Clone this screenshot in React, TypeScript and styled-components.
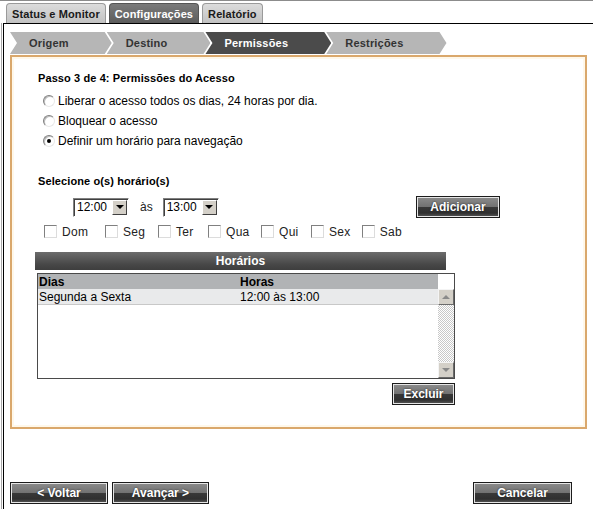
import * as React from 'react';
import styled, { createGlobalStyle, css } from 'styled-components';

const GlobalStyle = createGlobalStyle`
  html, body {
    margin: 0;
    padding: 0;
    background: #fff;
  }
  body {
    font-family: "Liberation Sans", Arial, sans-serif;
    font-size: 12px;
    color: #000;
  }
`;

const Page = styled.div`
  width: 593px;
  height: 509px;
  border-top: 1px solid #8c8c8c;
  box-sizing: border-box;
  overflow: hidden;
  display: flex;
  flex-direction: column;
`;

const TabRow = styled.div`
  display: flex;
  gap: 3px;
  padding: 2px 0 0 6px;
  height: 20px;
`;

const Tab = styled.div<{ $active?: boolean }>`
  height: 20px;
  box-sizing: border-box;
  padding: 0 5px;
  display: flex;
  align-items: center;
  font-weight: bold;
  font-size: 11px;
  letter-spacing: 0.1px;
  border: 1px solid #9a9a9a;
  border-bottom: none;
  border-radius: 4px 4px 0 0;
  color: #1a1a1a;
  background: linear-gradient(#dcdcdc, #c2c2c2);
  ${p => p.$active && css`
    color: #fff;
    border-color: #555;
    background: linear-gradient(#7a7a7a, #5c5c5c);
  `}
`;

const Body = styled.div`
  flex: 1;
  margin-left: 1px;
  border-left: 1px solid #a8a8a8;
  display: flex;
`;

const Frame = styled.div`
  flex: 1;
  margin-left: 1px;
  border-left: 1px solid #000;
  border-top: 1px solid #000;
  padding: 8px 0 0 6px;
  display: flex;
  flex-direction: column;
`;

const StepBar = styled.div`
  display: flex;
  height: 22px;
`;

const Step = styled.div<{ $active?: boolean; $first?: boolean }>`
  height: 22px;
  padding: 0 43px 0 19px;
  margin-left: ${p => (p.$first ? '0' : '-5px')};
  display: flex;
  align-items: center;
  font-weight: bold;
  font-size: 11px;
  letter-spacing: 0.2px;
  color: #333;
  background: #b6b6b6;
  clip-path: polygon(0 0, calc(100% - 7px) 0, 100% 50%, calc(100% - 7px) 100%, 0 100%, 7px 50%);
  ${p => p.$active && css`
    color: #fff;
    background: #4b4b4b;
  `}
`;

const StepBox = styled.div`
  margin-top: 1px;
  width: 577px;
  height: 374px;
  box-sizing: border-box;
  border: 2px solid #daa86c;
  box-shadow: inset 0 0 0 2px #fff8ea;
  padding: 14px 0 0 26px;
  display: flex;
  flex-direction: column;
`;

const Heading = styled.div`
  font-weight: bold;
  font-size: 11px;
  line-height: 14px;
  height: 14px;
  letter-spacing: 0.1px;
`;

const OptionList = styled.div`
  margin-top: 6px;
  display: flex;
  flex-direction: column;
`;

const OptionRow = styled.label`
  height: 20px;
  display: flex;
  align-items: center;
  gap: 3px;
  padding-left: 5px;
`;

const Radio = styled.span<{ $checked?: boolean }>`
  width: 12px;
  height: 12px;
  box-sizing: border-box;
  border-radius: 50%;
  border: 1px solid;
  border-color: #808080 #e8e8e8 #e8e8e8 #808080;
  background: #fff;
  box-shadow: inset 1px 1px 0 #bdbdbd;
  display: flex;
  align-items: center;
  justify-content: center;
  &::after {
    content: '';
    width: 4px;
    height: 4px;
    border-radius: 50%;
    background: ${p => (p.$checked ? '#000' : 'transparent')};
  }
`;

const SectionTitle = styled(Heading)`
  margin-top: 23px;
`;

const TimeRow = styled.div`
  margin-top: 8px;
  width: 462px;
  height: 22px;
  display: flex;
  align-items: center;
`;

const SelectBox = styled.div<{ $offset?: number }>`
  width: 56px;
  height: 19px;
  box-sizing: border-box;
  margin-left: ${p => p.$offset ?? 0}px;
  border: 1px solid;
  border-color: #808080 #fff #fff #808080;
  box-shadow: inset 1px 1px 0 #404040;
  background: #fff;
  display: flex;
  align-items: center;
  justify-content: space-between;
  padding: 1px 1px 1px 3px;
`;

const SelectButton = styled.span`
  width: 15px;
  height: 15px;
  box-sizing: border-box;
  background: #d4d0c8;
  border: 1px solid;
  border-color: #fff #404040 #404040 #fff;
  display: flex;
  align-items: center;
  justify-content: center;
  &::after {
    content: '';
    border-left: 4px solid transparent;
    border-right: 4px solid transparent;
    border-top: 4px solid #000;
  }
`;

const Between = styled.span`
  margin: 0 10px 0 11px;
  color: #222;
`;

const ActionButton = styled.button<{ $width: number }>`
  width: ${p => p.$width}px;
  height: 22px;
  box-sizing: border-box;
  padding: 0;
  border: 1px solid #1c1c1c;
  box-shadow: inset 0 0 0 1px #e6e6e6;
  background: linear-gradient(#8c8c8c 0%, #727272 48%, #383838 52%, #303030 80%, #5a5a5a 100%);
  color: #fff;
  font-family: "Liberation Sans", Arial, sans-serif;
  font-weight: bold;
  font-size: 12px;
  text-shadow: 0 0 2px #222;
  cursor: pointer;
`;

const AddButton = styled(ActionButton)`
  margin-left: auto;
`;

const DayRow = styled.div`
  margin-top: 6px;
  height: 15px;
  display: flex;
  align-items: center;
  padding-left: 6px;
`;

const DayItem = styled.label<{ $width: number }>`
  width: ${p => p.$width}px;
  display: flex;
  align-items: center;
  gap: 5px;
  color: #222;
  letter-spacing: 0.3px;
`;

const Checkbox = styled.span`
  width: 13px;
  height: 13px;
  box-sizing: border-box;
  border: 1px solid;
  border-color: #808080 #dcdcdc #dcdcdc #808080;
  background: #fff;
`;

const TableTitle = styled.div`
  margin: 13px 0 0 -3px;
  width: 411px;
  height: 18px;
  background: linear-gradient(#6c6c6c, #474747 70%, #3e3e3e);
  color: #fff;
  font-weight: bold;
  font-size: 12px;
  display: flex;
  align-items: center;
  justify-content: center;
`;

const Grid = styled.div`
  margin: 3px 0 0 -1px;
  width: 418px;
  height: 106px;
  box-sizing: border-box;
  border: 1px solid #4a4a4a;
  display: flex;
`;

const GridMain = styled.div`
  flex: 1;
  display: flex;
  flex-direction: column;
`;

const GridRow = styled.div<{ $header?: boolean }>`
  display: grid;
  grid-template-columns: 201px 1fr;
  height: 15px;
  align-items: center;
  padding-left: 1px;
  background: #e9eaeb;
  border-bottom: 1px solid #c8c8c8;
  ${p => p.$header && css`
    background: #b1b3b5;
    border-bottom: none;
    font-weight: bold;
    font-size: 12px;
  `}
`;

const ScrollColumn = styled.div`
  width: 16px;
  display: flex;
  flex-direction: column;
  padding-top: 15px;
`;

const ScrollTrack = styled.div`
  flex: 1;
  background-color: #fff;
  background-image: repeating-conic-gradient(#c8c8c8 0% 25%, #fff 0% 50%);
  background-size: 2px 2px;
`;

const ScrollArrow = styled.div<{ $down?: boolean }>`
  height: 16px;
  box-sizing: border-box;
  background: #d4d0c8;
  border: 1px solid;
  border-color: #f4f4f4 #6a6a6a #6a6a6a #f4f4f4;
  display: flex;
  align-items: center;
  justify-content: center;
  &::after {
    content: '';
    border-left: 4px solid transparent;
    border-right: 4px solid transparent;
    ${p => (p.$down ? 'border-top: 4px solid #8a8a8a;' : 'border-bottom: 4px solid #8a8a8a;')}
  }
`;

const DeleteRow = styled.div`
  margin-top: 4px;
  width: 417px;
  display: flex;
  justify-content: flex-end;
`;

const Footer = styled.div`
  margin-top: 53px;
  padding-right: 21px;
  display: flex;
  gap: 4px;
`;

const CancelButton = styled(ActionButton)`
  margin-left: auto;
`;

const days = [
  { label: 'Dom', width: 61 },
  { label: 'Seg', width: 53 },
  { label: 'Ter', width: 50 },
  { label: 'Qua', width: 53 },
  { label: 'Qui', width: 50 },
  { label: 'Sex', width: 51 },
  { label: 'Sab', width: 40 },
];

const options = [
  { label: 'Liberar o acesso todos os dias, 24 horas por dia.', checked: false },
  { label: 'Bloquear o acesso', checked: false },
  { label: 'Definir um horário para navegação', checked: true },
];

const steps = ['Origem', 'Destino', 'Permissões', 'Restrições'];

const App: React.FC = () => (
  <>
    <GlobalStyle />
    <Page>
      <TabRow>
        <Tab>Status e Monitor</Tab>
        <Tab $active>Configurações</Tab>
        <Tab>Relatório</Tab>
      </TabRow>
      <Body>
        <Frame>
          <StepBar>
            {steps.map((s, i) => (
              <Step key={s} $first={i === 0} $active={s === 'Permissões'}>{s}</Step>
            ))}
          </StepBar>
          <StepBox>
            <Heading>Passo 3 de 4: Permissões do Acesso</Heading>
            <OptionList>
              {options.map(o => (
                <OptionRow key={o.label}>
                  <Radio $checked={o.checked} />
                  {o.label}
                </OptionRow>
              ))}
            </OptionList>
            <SectionTitle>Selecione o(s) horário(s)</SectionTitle>
            <TimeRow>
              <SelectBox $offset={35}>12:00<SelectButton /></SelectBox>
              <Between>às</Between>
              <SelectBox>13:00<SelectButton /></SelectBox>
              <AddButton $width={84}>Adicionar</AddButton>
            </TimeRow>
            <DayRow>
              {days.map(d => (
                <DayItem key={d.label} $width={d.width}>
                  <Checkbox />
                  {d.label}
                </DayItem>
              ))}
            </DayRow>
            <TableTitle>Horários</TableTitle>
            <Grid>
              <GridMain>
                <GridRow $header>
                  <span>Dias</span>
                  <span>Horas</span>
                </GridRow>
                <GridRow>
                  <span>Segunda a Sexta</span>
                  <span>12:00 às 13:00</span>
                </GridRow>
              </GridMain>
              <ScrollColumn>
                <ScrollArrow />
                <ScrollTrack />
                <ScrollArrow $down />
              </ScrollColumn>
            </Grid>
            <DeleteRow>
              <ActionButton $width={63}>Excluir</ActionButton>
            </DeleteRow>
          </StepBox>
          <Footer>
            <ActionButton $width={98}>&lt; Voltar</ActionButton>
            <ActionButton $width={97}>Avançar &gt;</ActionButton>
            <CancelButton $width={99}>Cancelar</CancelButton>
          </Footer>
        </Frame>
      </Body>
    </Page>
  </>
);

export default App;
